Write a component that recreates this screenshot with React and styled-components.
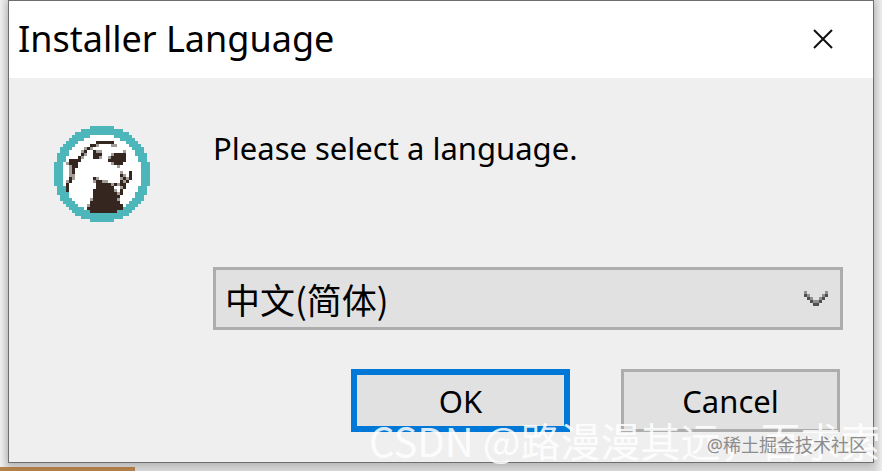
import { useState } from "react"
import styled, { createGlobalStyle } from "styled-components"

const GlobalStyle = createGlobalStyle`
    * {
        box-sizing: border-box;
    }

    body {
        margin: 0;
        background: #e4e4e4;
        font-family: "Noto Sans", "Noto Sans CJK SC", sans-serif;
        color: #000;
    }
`

const Desktop = styled.div`
    position: relative;
    min-height: 100vh;
    padding: 0 8px 8px;
    overflow: hidden;
    background: linear-gradient(90deg, #efefef 0, #d8d8d8 8px, #d8d8d8 calc(100% - 8px), #ececec 100%);
`

const Taskbar = styled.div`
    position: absolute;
    left: 0;
    bottom: 0;
    width: 135px;
    height: 4px;
    background: #b5824a;
`

const Dialog = styled.main`
    position: relative;
    border: 1px solid #6e6e6e;
    background: #efefef;
    box-shadow: 0 2px 8px rgba(0, 0, 0, 0.2);
`

const TitleBar = styled.header`
    display: flex;
    align-items: center;
    justify-content: space-between;
    height: 77px;
    padding: 0 32px 2px 9px;
    background: #fff;
`

const TitleText = styled.h1`
    margin: 0;
    font-size: 36px;
    font-weight: 400;
    line-height: 48px;
`

const CloseButton = styled.button`
    display: flex;
    align-items: center;
    justify-content: center;
    width: 36px;
    height: 36px;
    padding: 0;
    border: 0;
    background: none;
`

const Content = styled.form`
    display: grid;
    grid-template-columns: 96px 1fr;
    column-gap: 63px;
    padding: 48px 30px 30px 45px;
`

const Fields = styled.div`
    display: flex;
    flex-direction: column;
`

const Message = styled.label`
    height: 141px;
    font-size: 31px;
    line-height: 44px;
`

const SelectWrapper = styled.div`
    display: grid;
    align-items: center;

    > * {
        grid-area: 1 / 1;
    }

    svg {
        justify-self: end;
        margin-right: 12px;
        pointer-events: none;
    }
`

const LanguageSelect = styled.select`
    width: 100%;
    height: 63px;
    padding: 0 48px 0 9px;
    appearance: none;
    border: 3px solid #adadad;
    border-radius: 0;
    background: #e1e1e1;
    color: #000;
    font: 35px "Noto Sans CJK SC", sans-serif;
`

const Buttons = styled.div`
    display: flex;
    justify-content: flex-end;
    gap: 51px;
    padding: 39px 3px 0 0;
`

const DialogButton = styled.button`
    width: 219px;
    height: 63px;
    padding: 0;
    border: ${({ $primary }) => ($primary ? "6px solid #0078d7" : "3px solid #adadad")};
    background: #e1e1e1;
    color: #000;
    font: 31px "Noto Sans", sans-serif;
`

const Watermark = styled.div`
    position: absolute;
    left: 369px;
    bottom: 6px;
    color: rgba(255, 255, 255, 0.85);
    font-family: "Noto Sans CJK SC", sans-serif;
    font-size: 40px;
    line-height: 50px;
    white-space: nowrap;
    pointer-events: none;
`

const Credit = styled.div`
    position: absolute;
    right: 15px;
    bottom: 12px;
    color: #8c8c8c;
    font-size: 18px;
    line-height: 28px;
    pointer-events: none;
`

const TEAL = "#4db6bb"
const DARK = "#35261f"
const GREY = "#a39d99"

// one row of the 32x32 icon at a time: [x, y, width]
const disc = (radius) =>
    Array.from({ length: 32 }, (_, y) => {
        const half = Math.round(Math.sqrt(Math.max(0, radius ** 2 - (15.5 - y) ** 2)))
        return [16 - half, y, half * 2]
    })

const DARK_RUNS = [
    [14, 5, 6], [12, 6, 2], [11, 7, 1], [10, 8, 1], [13, 8, 1], [9, 9, 1], [13, 9, 3],
    [20, 9, 4], [8, 10, 1], [13, 10, 2], [19, 10, 5], [5, 11, 4], [18, 11, 6],
    [5, 12, 3], [20, 12, 3], [6, 13, 2], [6, 14, 1], [6, 15, 1], [25, 15, 1],
    [22, 16, 1], [25, 16, 1], [5, 17, 1], [13, 17, 1], [23, 17, 1], [25, 17, 1],
    [5, 18, 1], [14, 18, 2], [22, 18, 1], [24, 18, 1], [4, 19, 1], [14, 19, 5],
    [20, 19, 1], [22, 19, 2], [4, 20, 1], [14, 20, 6], [23, 20, 1], [4, 21, 1],
    [13, 21, 7], [22, 21, 1], [13, 22, 8], [22, 22, 1], [13, 23, 9], [13, 24, 8],
    [12, 25, 10], [12, 26, 11], [11, 27, 12], [12, 28, 9],
]

const GREY_RUNS = [
    [14, 6, 1], [19, 6, 2], [10, 7, 1], [12, 7, 1], [9, 8, 1], [14, 8, 2], [23, 8, 1],
    [10, 9, 1], [19, 9, 1], [9, 10, 1], [15, 10, 1], [18, 10, 1], [4, 12, 1],
    [19, 12, 1], [5, 13, 1], [21, 13, 1], [5, 14, 1], [5, 15, 1], [22, 15, 1],
    [5, 16, 2], [23, 16, 1], [6, 17, 1], [14, 17, 1], [22, 17, 1], [24, 17, 1],
    [4, 18, 1], [13, 18, 1], [16, 18, 2], [23, 18, 1], [19, 19, 1], [21, 19, 1],
    [22, 20, 1], [20, 21, 1], [21, 22, 1], [12, 24, 1], [21, 24, 1], [11, 26, 1],
]

const Runs = ({ runs, fill }) => (
    <g fill={fill}>
        {runs.map(([x, y, width]) => (
            <rect key={`${x}-${y}`} x={x} y={y} width={width} height="1" />
        ))}
    </g>
)

const Logo = () => (
    <svg width="96" height="96" viewBox="0 0 32 32" shapeRendering="crispEdges" aria-hidden="true">
        <Runs runs={disc(16)} fill={TEAL} />
        <Runs runs={disc(13)} fill="#fff" />
        <Runs runs={GREY_RUNS} fill={GREY} />
        <Runs runs={DARK_RUNS} fill={DARK} />
    </svg>
)

const App = () => {
    const [language, setLanguage] = useState("zh")

    return (
        <Desktop>
            <GlobalStyle />
            <Taskbar />
            <Dialog>
                <TitleBar>
                    <TitleText>Installer Language</TitleText>
                    <CloseButton type="button" aria-label="Close">
                        <svg width="20" height="20" viewBox="0 0 20 20" stroke="#111" strokeWidth="2">
                            <path d="M1 1L19 19M19 1L1 19" />
                        </svg>
                    </CloseButton>
                </TitleBar>
                <Content onSubmit={(e) => e.preventDefault()}>
                    <Logo />
                    <Fields>
                        <Message htmlFor="language">Please select a language.</Message>
                        <SelectWrapper>
                            <LanguageSelect id="language" value={language} onChange={(e) => setLanguage(e.target.value)}>
                                <option value="zh">中文(简体)</option>
                            </LanguageSelect>
                            <svg width="27" height="15" viewBox="0 0 9 5" shapeRendering="crispEdges">
                                <path
                                    fill="#8f8f8f"
                                    d="M0 0h1v1h-1zM1 1h1v1h-1zM2 2h1v1h-1zM3 3h2v1h-2zM5 2h1v1h-1zM6 1h1v1h-1zM7 0h1v1h-1z"
                                />
                                <path
                                    fill="#505050"
                                    d="M0 1h1v1h-1zM1 2h1v1h-1zM2 3h1v1h-1zM3 4h2v1h-2zM5 3h1v1h-1zM6 2h1v1h-1zM7 1h1v1h-1z"
                                />
                            </svg>
                        </SelectWrapper>
                        <Buttons>
                            <DialogButton type="submit" $primary>OK</DialogButton>
                            <DialogButton type="button">Cancel</DialogButton>
                        </Buttons>
                    </Fields>
                </Content>
            </Dialog>
            <Watermark>CSDN @路漫漫其远，百求索</Watermark>
            <Credit>@稀土掘金技术社区</Credit>
        </Desktop>
    )
}

export default App
